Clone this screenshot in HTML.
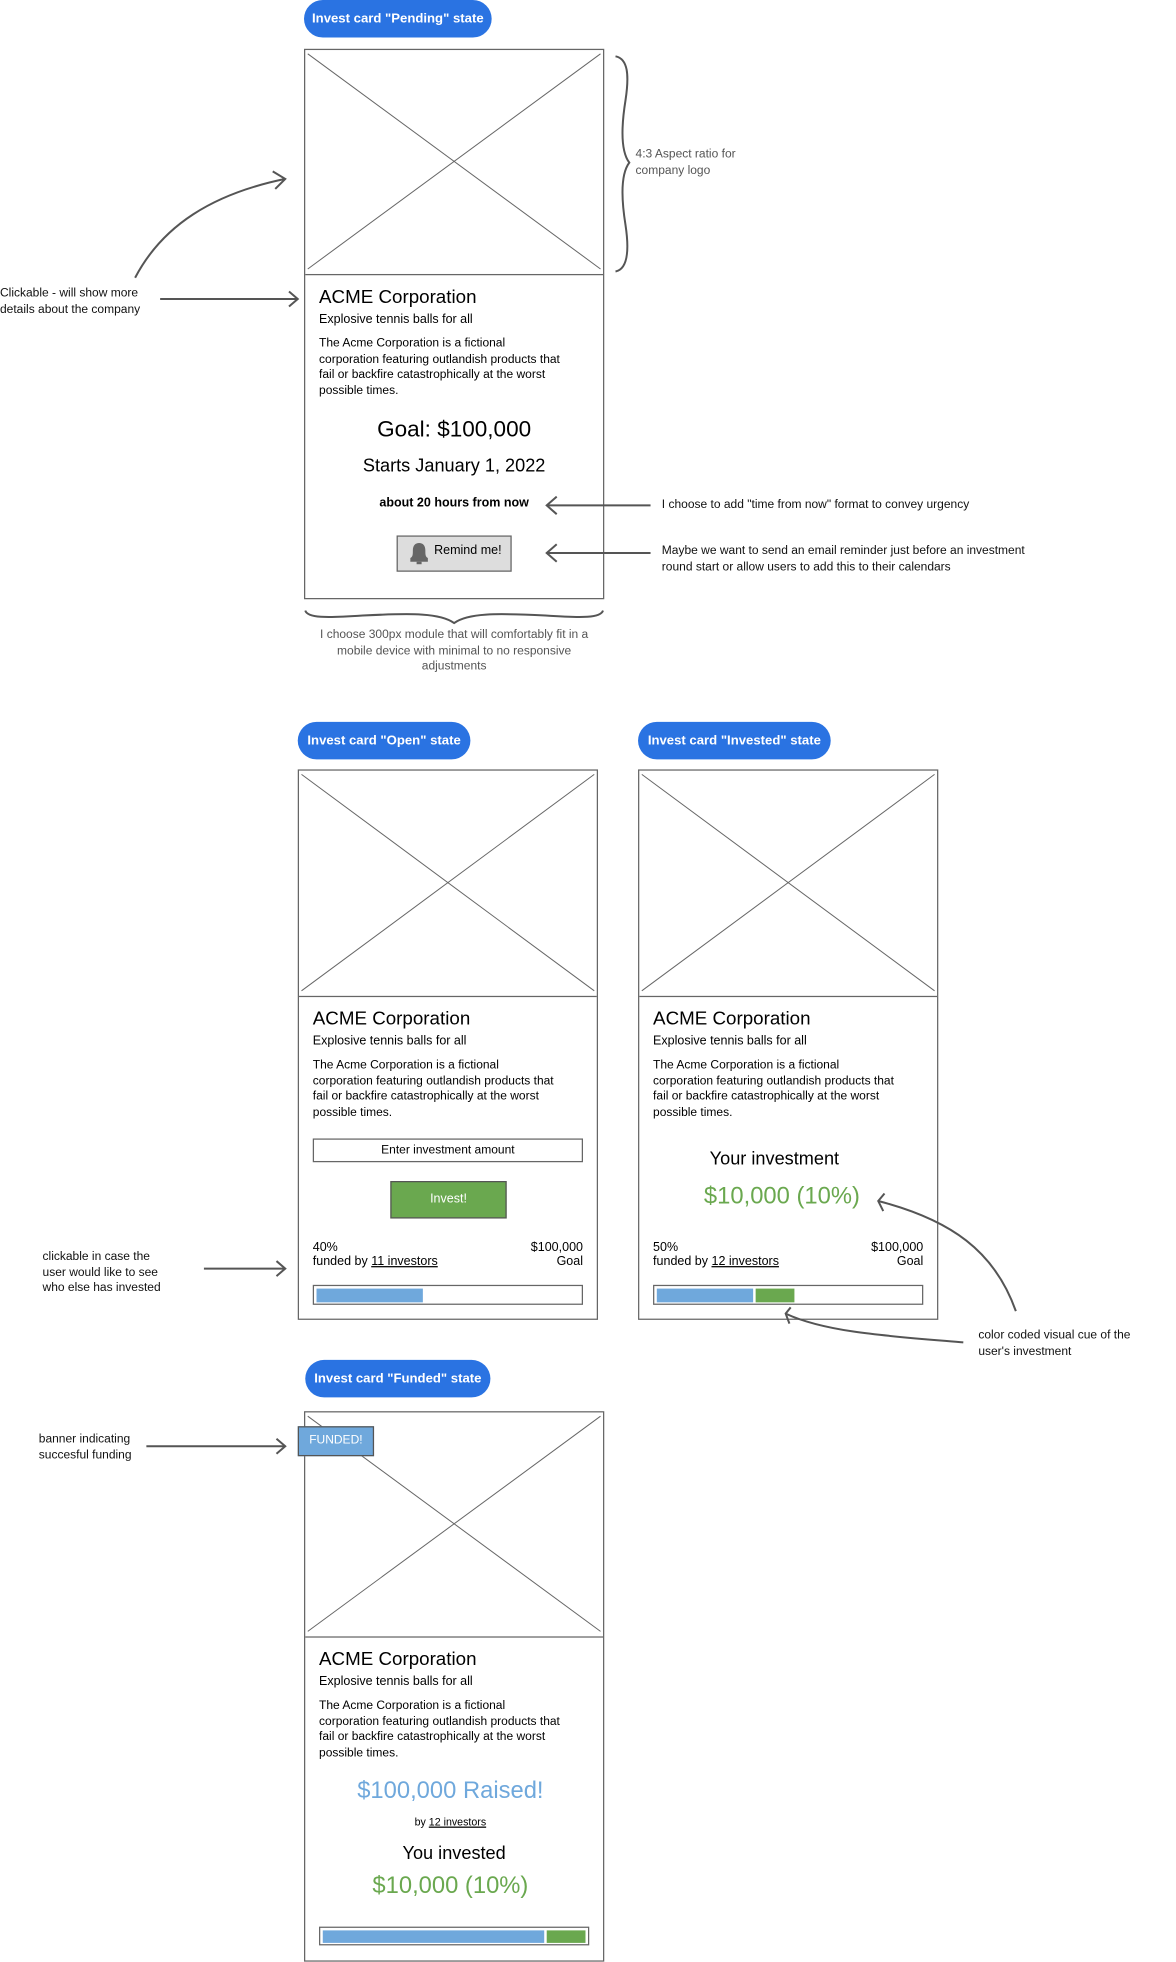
<!DOCTYPE html>
<html><head><meta charset="utf-8"><style>
html,body{margin:0;padding:0;background:#fff;width:1176px;height:1958px;overflow:hidden}
#w{position:absolute;left:0;top:0;width:940px;height:1565px;transform:scale(1.25106);transform-origin:0 0;font-family:"Liberation Sans",sans-serif;color:#000}
.a{position:absolute;white-space:nowrap}
.pill{position:absolute;background:#2a73e2;color:#fff;font-weight:bold;font-size:10.5px;border-radius:15px;text-align:center;height:30px;line-height:30px}
.card{position:absolute;border:1px solid #666;box-sizing:border-box}
.img{position:absolute;left:0;top:0;right:0;border-bottom:1px solid #666}
.t{font-size:15px}
.s{font-size:10px}
.p{font-size:9.6px;line-height:12.6px}
.note{font-size:9.6px;line-height:12.5px;color:#111}
.g{color:#6aa84f}
.c{text-align:center}
.bar{position:absolute;border:1px solid #666;box-sizing:border-box;background:#fff}
</style></head><body><div id="w">

<div class="pill" style="left:243px;top:0;width:150px">Invest card "Pending" state</div>
<div class="card" style="left:243px;top:39px;width:240px;height:440px"><div class="img" style="height:179px"></div></div>
<div class="a t" style="left:255px;top:229px">ACME Corporation</div>
<div class="a s" style="left:255px;top:250px">Explosive tennis balls for all</div>
<div class="a p" style="left:255px;top:269px">The Acme Corporation is a fictional<br>corporation featuring outlandish products that<br>fail or backfire catastrophically at the worst<br>possible times.</div>
<div class="a c" style="left:243px;width:240px;top:333px;font-size:18px">Goal: $100,000</div>
<div class="a c" style="left:243px;width:240px;top:365px;font-size:14.5px">Starts January 1, 2022</div>
<div class="a c" style="left:243px;width:240px;top:397px;font-size:10px;font-weight:bold">about 20 hours from now</div>
<div class="a" style="left:317px;top:428px;width:92px;height:29px;border:1px solid #666;background:#ddd;box-sizing:border-box"></div>
<svg class="a" style="left:325px;top:432px" width="20" height="20"><path d="M3 17 L3 14 C5 13 5 11 5 8 C5 4 7 2 10 2 C13 2 15 4 15 8 C15 11 15 13 17 14 L17 17 Z" fill="#666"/><rect x="8" y="17" width="4" height="2" fill="#666"/></svg>
<div class="a" style="left:347px;top:435px;font-size:10px">Remind me!</div>

<div class="a note" style="left:508px;top:118px;color:#555">4:3 Aspect ratio for<br>company logo</div>
<div class="a note" style="left:0;top:229px">Clickable - will show more<br>details about the company</div>
<div class="a note" style="left:529px;top:398px">I choose to add "time from now" format to convey urgency</div>
<div class="a note" style="left:529px;top:435px">Maybe we want to send an email reminder just before an investment<br>round start or allow users to add this to their calendars</div>
<div class="a note c" style="left:233px;width:260px;top:502px;color:#555">I choose 300px module that will comfortably fit in a<br>mobile device with minimal to no responsive<br>adjustments</div>

<!-- Open -->
<div class="pill" style="left:238px;top:577px;width:138px">Invest card "Open" state</div>
<div class="card" style="left:238px;top:615px;width:240px;height:440px"><div class="img" style="height:180px"></div></div>
<div class="a t" style="left:250px;top:806px">ACME Corporation</div>
<div class="a s" style="left:250px;top:827px">Explosive tennis balls for all</div>
<div class="a p" style="left:250px;top:846px">The Acme Corporation is a fictional<br>corporation featuring outlandish products that<br>fail or backfire catastrophically at the worst<br>possible times.</div>
<div class="a c" style="left:250px;top:910px;width:216px;height:19px;border:1px solid #666;box-sizing:border-box;font-size:9.6px;line-height:17px">Enter investment amount</div>
<div class="a c" style="left:312px;top:944px;width:93px;height:30px;background:#6aa84f;border:1px solid #555;box-sizing:border-box;color:#fff;font-size:10px;line-height:28px">Invest!</div>
<div class="a s" style="left:250px;top:992px">40%<br>funded by <u>11 investors</u></div>
<div class="a s" style="left:380px;width:86px;top:992px;text-align:right">$100,000<br>Goal</div>
<div class="bar" style="left:250px;top:1027px;width:216px;height:16px"><div style="position:absolute;left:2px;top:2px;width:85px;height:11px;background:#6fa8dc"></div></div>
<div class="a note" style="left:34px;top:999px">clickable in case the<br>user would like to see<br>who else has invested</div>

<!-- Invested -->
<div class="pill" style="left:510px;top:577px;width:154px">Invest card "Invested" state</div>
<div class="card" style="left:510px;top:615px;width:240px;height:440px"><div class="img" style="height:180px"></div></div>
<div class="a t" style="left:522px;top:806px">ACME Corporation</div>
<div class="a s" style="left:522px;top:827px">Explosive tennis balls for all</div>
<div class="a p" style="left:522px;top:846px">The Acme Corporation is a fictional<br>corporation featuring outlandish products that<br>fail or backfire catastrophically at the worst<br>possible times.</div>
<div class="a c" style="left:499px;width:240px;top:919px;font-size:14.5px">Your investment</div>
<div class="a c g" style="left:505px;width:240px;top:946px;font-size:19px">$10,000 (10%)</div>
<div class="a s" style="left:522px;top:992px">50%<br>funded by <u>12 investors</u></div>
<div class="a s" style="left:652px;width:86px;top:992px;text-align:right">$100,000<br>Goal</div>
<div class="bar" style="left:522px;top:1027px;width:216px;height:16px"><div style="position:absolute;left:2px;top:2px;width:77px;height:11px;background:#6fa8dc"></div><div style="position:absolute;left:81px;top:2px;width:31px;height:11px;background:#6aa84f"></div></div>
<div class="a note" style="left:782px;top:1062px">color coded visual cue of the<br>user's investment</div>

<!-- Funded -->
<div class="pill" style="left:244px;top:1087px;width:148px">Invest card "Funded" state</div>
<div class="card" style="left:243px;top:1128px;width:240px;height:440px"><div class="img" style="height:179px"></div></div>
<div class="a t" style="left:255px;top:1318px">ACME Corporation</div>
<div class="a s" style="left:255px;top:1339px">Explosive tennis balls for all</div>
<div class="a p" style="left:255px;top:1358px">The Acme Corporation is a fictional<br>corporation featuring outlandish products that<br>fail or backfire catastrophically at the worst<br>possible times.</div>
<div class="a c" style="left:240px;width:240px;top:1421px;font-size:19px;color:#6fa8dc">$100,000 Raised!</div>
<div class="a c" style="left:240px;width:240px;top:1451px;font-size:8.5px">by <u>12 investors</u></div>
<div class="a c" style="left:243px;width:240px;top:1474px;font-size:14.5px">You invested</div>
<div class="a c g" style="left:240px;width:240px;top:1497px;font-size:19px">$10,000 (10%)</div>
<div class="bar" style="left:255px;top:1540px;width:216px;height:15px"><div style="position:absolute;left:2px;top:2px;width:177px;height:10px;background:#6fa8dc"></div><div style="position:absolute;left:181px;top:2px;width:31px;height:10px;background:#6aa84f"></div></div>
<div class="a note" style="left:31px;top:1145px">banner indicating<br>succesful funding</div>

<svg width="940" height="1565" style="position:absolute;left:0;top:0" fill="none" stroke="#555" stroke-width="1.6">
<g stroke="#666" stroke-width="0.8">
<line x1="246" y1="43" x2="480" y2="215"/><line x1="480" y1="43" x2="246" y2="215"/>
<line x1="241" y1="619" x2="475" y2="792"/><line x1="475" y1="619" x2="241" y2="792"/>
<line x1="513" y1="619" x2="747" y2="792"/><line x1="747" y1="619" x2="513" y2="792"/>
<line x1="246" y1="1132" x2="480" y2="1304"/><line x1="480" y1="1132" x2="246" y2="1304"/>
</g>
<path d="M492 45 C502 47 503 60 500 80 C496 105 497 122 503 130 C497 138 496 155 500 180 C503 200 502 215 492 217"/>
<path d="M244 488 C246 494 260 494 290 492 C330 490 352 490 363 498 C374 490 396 490 436 492 C466 494 480 494 482 488"/>
<path d="M108 222 C130 180 170 155 228 143"/><path d="M218 137 L228 143 L220 151"/>
<path d="M128 239 L238 239"/><path d="M231 233 L238 239 L231 245"/>
<path d="M520 404 L437 404"/><path d="M445 397 L437 404 L445 411"/>
<path d="M520 442 L437 442"/><path d="M445 435 L437 442 L445 449"/>
<path d="M163 1014 L228 1014"/><path d="M221 1008 L228 1014 L221 1020"/>
<path d="M117 1156 L228 1156"/><path d="M221 1150 L228 1156 L221 1162"/>
<path d="M812 1048 C795 1000 760 975 702 960"/><path d="M707 954 L702 960 L706 968"/>
<path d="M770 1073 C710 1068 660 1065 628 1050"/><path d="M632 1045 L628 1050 L631 1058"/>
</svg>
<div class="a" style="left:238px;top:1140px;width:61px;height:24px;background:#6fa8dc;border:1px solid #555;box-sizing:border-box;color:#fff;font-size:9.6px;line-height:22px;text-align:center">FUNDED!</div>

</div></body></html>
